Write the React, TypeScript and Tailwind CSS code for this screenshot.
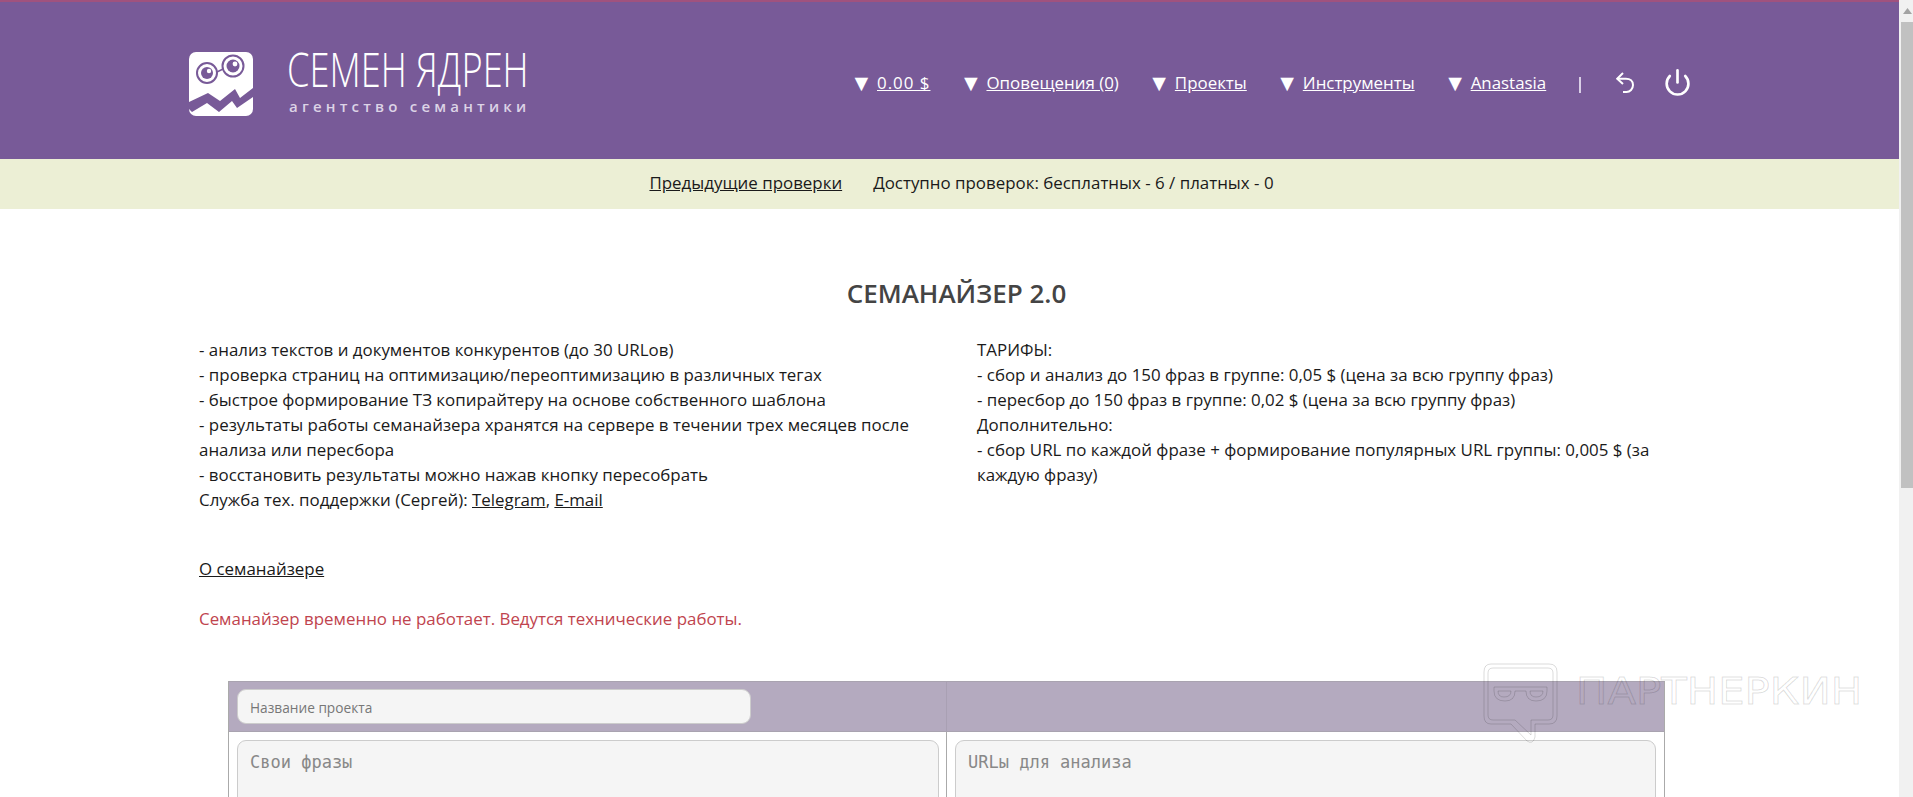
import { Power } from "lucide-react";

const navItems = ["0.00 $", "Оповещения (0)", "Проекты", "Инструменты", "Anastasia"];

function LogoMark() {
  return (
    <svg width="64" height="64" viewBox="0 0 64 64" className="shrink-0">
      <rect width="64" height="64" rx="7" fill="#fff" />
      <circle cx="18" cy="21" r="10" fill="none" stroke="#785a98" strokeWidth="2" />
      <circle cx="18" cy="21" r="6" fill="#785a98" />
      <circle cx="20" cy="19" r="2.2" fill="#fff" />
      <circle cx="44" cy="14" r="10.5" fill="none" stroke="#785a98" strokeWidth="2" />
      <circle cx="44" cy="14" r="6.5" fill="#785a98" />
      <circle cx="46" cy="12" r="2.4" fill="#fff" />
      <path d="M28 20 L34 17" stroke="#785a98" strokeWidth="1.5" />
      <path d="M0 50 L19 41 L31 49 L46 37 L51 46 L64 36 V45 L48 56 L43 49 L30 60 L18 51 L3 60 L0 57 Z" fill="#785a98" />
    </svg>
  );
}

function BackIcon() {
  return (
    <svg width="18" height="21" viewBox="0 0 18 21" fill="none" stroke="#fff" strokeWidth="2" className="shrink-0">
      <path d="M7 1 L1.2 6.7 L7 12" />
      <path d="M1.2 6.7 H10 C14 6.7 17 9 17 13 C17 17 14 20 10.5 20 H7" />
    </svg>
  );
}

export default function App() {
  return (
    <div className="relative flex h-[797px] w-full overflow-hidden bg-white font-['Open_Sans',sans-serif] text-[16.9px] leading-[25px] font-normal text-[#1a1a1a]">
      <div className="min-w-0 flex-1">
        <header className="flex h-[159px] border-t-2 border-[#a0527e] bg-[#785a98]">
          <div className="ml-[189px] flex pt-[50px]">
            <LogoMark />
            <div className="ml-[34px] w-[240px]">
              <div className="-mt-[6px] h-[46px] origin-left scale-x-[0.77] whitespace-nowrap text-[47px] leading-[46px] font-light text-white">СЕМЕН ЯДРЕН</div>
              <div className="ml-[2px] mt-[6px] whitespace-nowrap text-[15px] leading-[16px] font-semibold tracking-[0.28em] text-[#dcd3e6]">агентство семантики</div>
            </div>
          </div>
          <nav className="ml-[323px] mt-[50px] flex h-[60px] items-center text-white">
            {navItems.map((item, i) => (
              <div key={item} className={`flex items-center ${i > 0 ? "ml-[29px]" : ""}`}>
                <span className="w-[27px] text-[23px] leading-none">▼</span>
                <a className={`whitespace-nowrap underline ${i === 0 ? "tracking-[1px]" : ""}`} href="#">{item}</a>
              </div>
            ))}
            <span className="ml-[33px] mt-[6px] h-[16px] w-[2px] bg-[#d9cfe6]" />
            <div className="ml-[35px] flex"><BackIcon /></div>
            <Power size={29} strokeWidth={2.2} className="ml-[29px]" />
          </nav>
        </header>
        <div className="flex h-[50px] items-center justify-center gap-[31px] bg-[#ecefd5] pb-[3px] pl-[24px]">
          <a className="underline" href="#">Предыдущие проверки</a>
          <span>Доступно проверок: бесплатных - 6 / платных - 0</span>
        </div>
        <main className="ml-[199px] w-[1515px] pt-[66px]">
          <h1 className="text-center text-[26px] leading-[36px] font-semibold text-[#444]">СЕМАНАЙЗЕР 2.0</h1>
          <div className="mt-[26px] flex gap-[41px]">
            <div className="w-[737px]">
              <div>- анализ текстов и документов конкурентов (до 30 URLов)</div>
              <div>- проверка страниц на оптимизацию/переоптимизацию в различных тегах</div>
              <div>- быстрое формирование ТЗ копирайтеру на основе собственного шаблона</div>
              <div>- результаты работы семанайзера хранятся на сервере в течении трех месяцев после анализа или пересбора</div>
              <div>- восстановить результаты можно нажав кнопку пересобрать</div>
              <div>Служба тех. поддержки (Сергей): <a className="underline" href="#">Telegram</a>, <a className="underline" href="#">E-mail</a></div>
            </div>
            <div className="w-[737px]">
              <div>ТАРИФЫ:</div>
              <div>- сбор и анализ до 150 фраз в группе: 0,05 $ (цена за всю группу фраз)</div>
              <div>- пересбор до 150 фраз в группе: 0,02 $ (цена за всю группу фраз)</div>
              <div>Дополнительно:</div>
              <div>- сбор URL по каждой фразе + формирование популярных URL группы: 0,005 $ (за каждую фразу)</div>
            </div>
          </div>
          <div className="mt-[44px]"><a className="underline" href="#">О семанайзере</a></div>
          <div className="mt-[25px] text-[#c0444e]">Семанайзер временно не работает. Ведутся технические работы.</div>
        </main>
        <div className="ml-[228px] mt-[50px] w-[1437px] border-x border-[#aaa]">
          <div className="flex h-[51px] border-y border-[#a9a3b0] bg-[#b4aabf]">
            <div className="w-[718px] border-r border-[#a9a0b3] px-[8px] pt-[7px]">
              <input
                placeholder="Название проекта"
                className="h-[35px] w-[514px] rounded-[9px] border border-[#ccc] bg-[#f5f5f5] px-[12px] pt-[2px] text-[13.7px] text-[#555] placeholder:text-[#777]"
              />
            </div>
            <div className="flex-1" />
          </div>
          <div className="flex">
            <div className="w-[718px] border-r border-[#aaa] px-[8px] pt-[8px]">
              <textarea
                placeholder="Свои фразы"
                className="block h-[200px] w-[702px] resize-none rounded-[9px] border border-[#ccc] bg-[#f5f5f5] px-[12px] py-[9px] font-['DejaVu_Sans_Mono',monospace] text-[17px] placeholder:text-[#888]"
              />
            </div>
            <div className="flex-1 px-[8px] pt-[8px]">
              <textarea
                placeholder="URLы для анализа"
                className="block h-[200px] w-full resize-none rounded-[9px] border border-[#ccc] bg-[#f5f5f5] px-[12px] py-[9px] font-['DejaVu_Sans_Mono',monospace] text-[17px] placeholder:text-[#888]"
              />
            </div>
          </div>
        </div>
      </div>
      <aside className="flex w-[14px] shrink-0 flex-col bg-[#f1f1f1] pl-[2px]">
        <div className="flex h-[22px] items-center justify-center">
          <svg width="9" height="6" viewBox="0 0 9 6"><path d="M4.5 0 L9 6 H0 Z" fill="#a3a3a3" /></svg>
        </div>
        <div className="h-[466px] bg-[#c1c1c1]" />
      </aside>
      <div className="pointer-events-none absolute left-[1483px] top-[663px] flex items-start">
        <svg width="75" height="81" viewBox="0 0 75 81" fill="none" stroke="#000" strokeOpacity="0.14" strokeWidth="1">
          <path d="M8 1 H66 Q74 1 74 9 V53 Q74 61 66 61 H52 V74 Q50 82 44 78 L28 61 H8 Q1 61 1 53 V9 Q1 1 8 1 Z" />
          <path d="M10 5 H65 Q70 5 70 10 V52 Q70 57 65 57 H48 V72 L32 57 H10 Q5 57 5 52 V10 Q5 5 10 5 Z" />
          <path d="M11 24 H64 V28 Q64 38 53 38 Q43 38 43 28 H32 Q32 38 22 38 Q11 38 11 28 Z" />
          <path d="M15 28 H28 Q28 34 21 34 Q15 34 15 28 M47 28 H60 Q60 34 53 34 Q47 34 47 28" />
        </svg>
        <span className="ml-[18px] mt-[6px] origin-left scale-x-[1.1] whitespace-nowrap font-['DejaVu_Sans',sans-serif] text-[38px] leading-[44px] font-normal text-transparent [-webkit-text-stroke:1px_rgba(0,0,0,0.14)]">ПАРТНЕРКИН</span>
      </div>
    </div>
  );
}
